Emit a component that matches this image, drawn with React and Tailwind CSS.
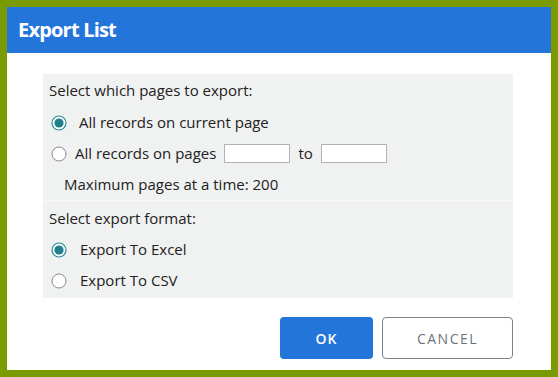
import React from 'react';

const font = { fontFamily: '"Open Sans", "Noto Sans", sans-serif' };

/* ── Radio ───────────────────────────────────────────────────────────── */
const Radio = ({ checked }) => (
  <svg width="16" height="16" viewBox="0 0 16 16" className="shrink-0">
    {checked ? (
      <>
        <circle cx="8" cy="8" r="7" fill="#fff" stroke="#2a8d9a" strokeWidth="1.2" />
        <circle cx="8" cy="8" r="4.6" fill="#1f7f8b" />
      </>
    ) : (
      <circle cx="8" cy="8" r="7" fill="#fff" stroke="#8a8a8a" strokeWidth="1" />
    )}
  </svg>
);

const Row = ({ checked, gap = 'gap-[12px]', children }) => (
  <div className={`h-[31px] flex items-center pl-[8px] ${gap}`}>
    <Radio checked={checked} />
    {children}
  </div>
);

const Box = () => <div className="w-[66px] h-[19px] bg-white border border-[#b3b3b3]" />;

export default function App() {
  return (
    <div className="w-[558px] h-[377px] bg-[#7a9a01] p-[7px]" style={font}>
      <div className="h-full bg-white flex flex-col">
        <div className="h-[46px] bg-[#2475d9] flex items-center px-[11px]">
          <h1 className="text-white text-[20px] font-bold tracking-[-0.8px]">Export List</h1>
        </div>

        <div className="mt-[21px] ml-[36px] mr-[38px] bg-[#f0f1f1] text-[15px] text-[#222]">
          <div className="border-b border-[#f8f8f8]">
            <div className="h-[32px] flex items-center pl-[6px]">Select which pages to export:</div>
            <div className="mt-[1px]">
              <Row checked gap="gap-[12px]">All records on current page</Row>
              <Row gap="gap-[8px]">
                <span>All records on pages</span>
                <Box />
                <span>to</span>
                <Box />
              </Row>
              <div className="h-[31px] flex items-center pl-[21px]">Maximum pages at a time: 200</div>
            </div>
          </div>
          <div className="pb-[2px] pt-[1px]">
            <div className="h-[32px] flex items-center pl-[6px]">Select export format:</div>
            <Row checked gap="gap-[13px]">Export To Excel</Row>
            <Row gap="gap-[13px]">Export To CSV</Row>
          </div>
        </div>

        <div className="mt-[19px] mr-[38px] flex justify-end gap-[9px]">
          <button className="w-[93px] h-[42px] rounded-[4px] bg-[#2475d9] text-white text-[14px] font-semibold tracking-[1px]">
            OK
          </button>
          <button className="w-[131px] h-[42px] rounded-[4px] bg-white border border-[#7b828a] text-[#6b737c] text-[14px] tracking-[1.5px]">
            CANCEL
          </button>
        </div>
      </div>
    </div>
  );
}
